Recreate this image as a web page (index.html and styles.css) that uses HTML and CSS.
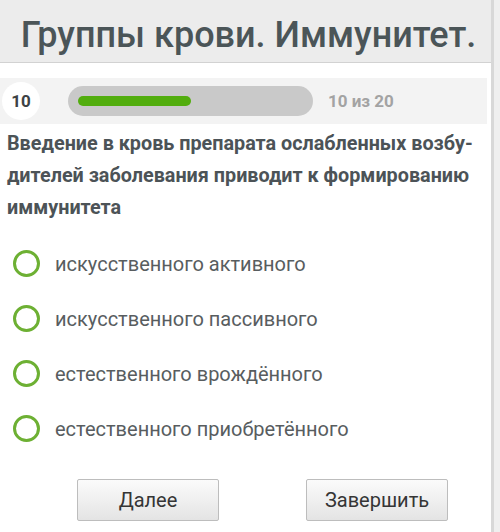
FILE: index.html
```html
<!DOCTYPE html>
<html lang="ru">
<head>
    <meta charset="UTF-8">
    <meta name="viewport" content="width=device-width, initial-scale=1.0">
    <title>Группы крови. Иммунитет.</title>
    <link rel="stylesheet" href="styles.css">
</head>
<body>
    <div class="page">
        <div class="test-header">
            <h1 class="test-title">Группы крови. Иммунитет.</h1>
        </div>

        <!-- Прогресс теста -->
        <div class="progress-row">
            <div class="question-num">10</div>
            <div class="progress-track">
                <div class="progress-fill" style="width: 113px"></div>
            </div>
            <div class="progress-count">10 из 20</div>
        </div>

        <div class="question-text">
            Введение в кровь препарата ослабленных возбу-<br>дителей заболевания приводит к формированию<br>иммунитета
        </div>

        <div class="answers">
            <label class="answer">
                <span class="radio"></span>
                <span class="answer-text">искусственного активного</span>
            </label>
            <label class="answer">
                <span class="radio"></span>
                <span class="answer-text">искусственного пассивного</span>
            </label>
            <label class="answer">
                <span class="radio"></span>
                <span class="answer-text">естественного врождённого</span>
            </label>
            <label class="answer">
                <span class="radio"></span>
                <span class="answer-text">естественного приобретённого</span>
            </label>
        </div>

        <div class="actions">
            <button class="btn">Далее</button>
            <button class="btn">Завершить</button>
        </div>
    </div>
</body>
</html>
```

FILE: styles.css
```css
:root {
    --text-main: #4c5357;
    --text-answer: #585d5f;
    --text-muted: #a3a3a3;
    --header-bg: #ececec;
    --row-bg: #f3f3f3;
    --green: #52ad0e;
    --radio-green: #6db033;
}

body {
    margin: 0;
    background: #efefef;
    font-family: Roboto, 'Noto Sans', sans-serif;
}

.page {
    width: 491px;
    height: 532px;
    background: #fff;
    border-right: 3px solid #d8d8d8;
    overflow: hidden;
}

.test-header {
    height: 62px;
    background: var(--header-bg);
    border-bottom: 1px solid #d2d2d2;
    display: flex;
    align-items: flex-end;
    justify-content: center;
}

.test-title {
    margin: 0 0 9px;
    font-size: 36px;
    font-weight: 500;
    line-height: 1;
    color: #4b5558;
    padding-left: 6px;
    white-space: nowrap;
}

.progress-row {
    margin: 15px 4px 0 0;
    height: 46px;
    background: var(--row-bg);
    display: flex;
    align-items: center;
}

.question-num {
    width: 38px;
    height: 38px;
    margin-left: 2px;
    border-radius: 50%;
    background: #fff;
    display: flex;
    align-items: center;
    justify-content: center;
    font-size: 17px;
    font-weight: 700;
    color: #3d4244;
}

.progress-track {
    width: 245px;
    height: 30px;
    margin-left: 28px;
    border-radius: 15px;
    background: #c9c9c9;
    display: flex;
    align-items: center;
    padding: 0 10px;
    box-sizing: border-box;
}

.progress-fill {
    height: 10px;
    border-radius: 5px;
    background: var(--green);
}

.progress-count {
    margin-left: 15px;
    font-size: 17px;
    font-weight: 700;
    color: var(--text-muted);
}

.question-text {
    padding: 4px 6px 0 7px;
    font-size: 19.8px;
    font-weight: 700;
    line-height: 32px;
    color: var(--text-main);
    white-space: nowrap;
}

.answers {
    margin-top: 12px;
}

.answer {
    height: 55px;
    display: flex;
    align-items: center;
    padding-left: 13px;
}

.radio {
    width: 27px;
    height: 27px;
    border: 3px solid var(--radio-green);
    border-radius: 50%;
    box-sizing: border-box;
    flex-shrink: 0;
}

.answer-text {
    margin-left: 15px;
    font-size: 20px;
    color: var(--text-answer);
}

.actions {
    display: flex;
    gap: 87px;
    padding-left: 77px;
    margin-top: 23px;
}

.btn {
    width: 142px;
    height: 42px;
    border: 1px solid #bdbdbd;
    border-radius: 2px;
    background: linear-gradient(#fbfbfb, #e4e4e4);
    font-family: Roboto, 'Noto Sans', sans-serif;
    font-size: 20px;
    color: #353535;
}
```
